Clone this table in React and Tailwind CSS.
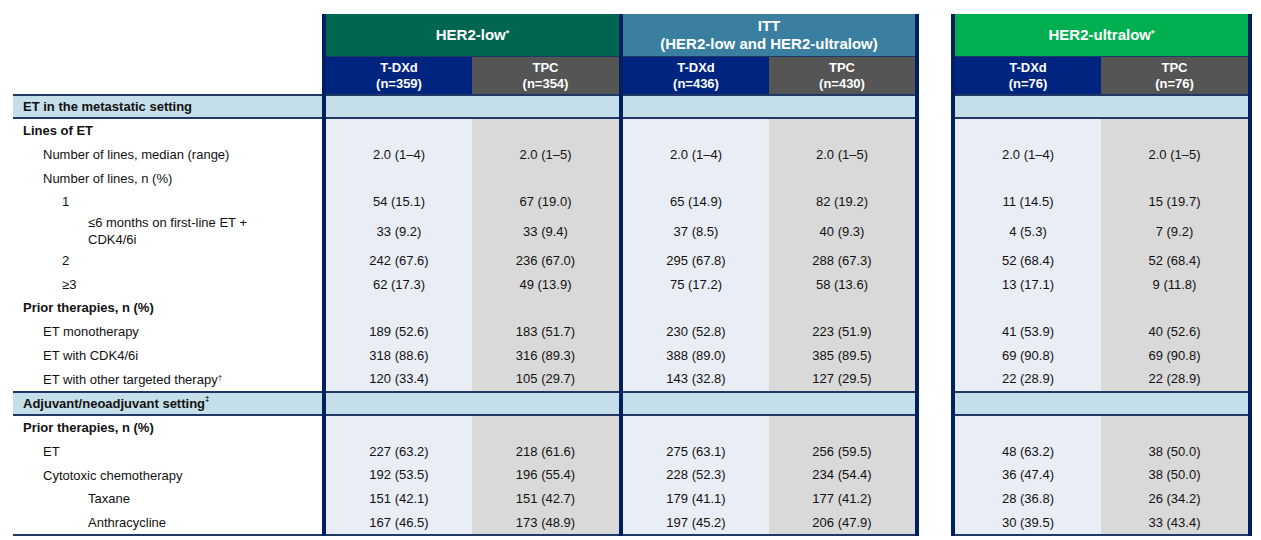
const NAVY = "bg-[#002060]";

const rows = [
  { label: "Lines of ET", bold: true, indent: 0 },
  { label: "Number of lines, median (range)", indent: 1, v: ["2.0 (1–4)", "2.0 (1–5)", "2.0 (1–4)", "2.0 (1–5)", "2.0 (1–4)", "2.0 (1–5)"] },
  { label: "Number of lines, n (%)", indent: 1 },
  { label: "1", indent: 2, v: ["54 (15.1)", "67 (19.0)", "65 (14.9)", "82 (19.2)", "11 (14.5)", "15 (19.7)"] },
  {
    label: (
      <>
        ≤6 months on first-line ET +<br />
        CDK4/6i
      </>
    ),
    indent: 3,
    tall: true,
    v: ["33 (9.2)", "33 (9.4)", "37 (8.5)", "40 (9.3)", "4 (5.3)", "7 (9.2)"],
  },
  { label: "2", indent: 2, v: ["242 (67.6)", "236 (67.0)", "295 (67.8)", "288 (67.3)", "52 (68.4)", "52 (68.4)"] },
  { label: "≥3", indent: 2, v: ["62 (17.3)", "49 (13.9)", "75 (17.2)", "58 (13.6)", "13 (17.1)", "9 (11.8)"] },
  { label: "Prior therapies, n (%)", bold: true, indent: 0 },
  { label: "ET monotherapy", indent: 1, v: ["189 (52.6)", "183 (51.7)", "230 (52.8)", "223 (51.9)", "41 (53.9)", "40 (52.6)"] },
  { label: "ET with CDK4/6i", indent: 1, v: ["318 (88.6)", "316 (89.3)", "388 (89.0)", "385 (89.5)", "69 (90.8)", "69 (90.8)"] },
  {
    label: (
      <>
        ET with other targeted therapy<sup className="text-[8px]">†</sup>
      </>
    ),
    indent: 1,
    v: ["120 (33.4)", "105 (29.7)", "143 (32.8)", "127 (29.5)", "22 (28.9)", "22 (28.9)"],
  },
  {
    section: (
      <>
        Adjuvant/neoadjuvant setting<sup className="text-[8px]">‡</sup>
      </>
    ),
  },
  { label: "Prior therapies, n (%)", bold: true, indent: 0 },
  { label: "ET", indent: 1, v: ["227 (63.2)", "218 (61.6)", "275 (63.1)", "256 (59.5)", "48 (63.2)", "38 (50.0)"] },
  { label: "Cytotoxic chemotherapy", indent: 1, v: ["192 (53.5)", "196 (55.4)", "228 (52.3)", "234 (54.4)", "36 (47.4)", "38 (50.0)"] },
  { label: "Taxane", indent: 3, v: ["151 (42.1)", "151 (42.7)", "179 (41.1)", "177 (41.2)", "28 (36.8)", "26 (34.2)"] },
  { label: "Anthracycline", indent: 3, v: ["167 (46.5)", "173 (48.9)", "197 (45.2)", "206 (47.9)", "30 (39.5)", "33 (43.4)"] },
];

const indents = ["pl-[10px]", "pl-[30px]", "pl-[49px]", "pl-[75px]"];
const widths = ["w-[146px]", "w-[147px]", "w-[146px]", "w-[146px]", "w-[146px]", "w-[147px]"];
const tints = ["bg-[#e9edf5]", "bg-[#d9d9d9]"];

const Line = () => <div className={`w-[4px] shrink-0 ${NAVY}`} />;
const Gap = () => <div className="w-[32px] shrink-0 bg-white" />;

const RowFrame = ({ h, label, cells }) => (
  <div className={`flex ${h}`}>
    {label}
    <Line />
    {cells[0]}
    {cells[1]}
    <Line />
    {cells[2]}
    {cells[3]}
    <Line />
    <Gap />
    <Line />
    {cells[4]}
    {cells[5]}
    <Line />
  </div>
);

const SectionRow = ({ title }) => {
  const band = "bg-[#c5dfea] border-y-2 border-[#1f3864]";
  return (
    <div className="flex h-[25px]">
      <div className={`w-[309px] shrink-0 ${band} pl-[10px] flex items-center font-bold`}>{title}</div>
      <Line />
      <div className={`w-[293px] shrink-0 ${band}`} />
      <Line />
      <div className={`w-[292px] shrink-0 ${band}`} />
      <Line />
      <Gap />
      <Line />
      <div className={`w-[293px] shrink-0 ${band}`} />
      <Line />
    </div>
  );
};

const DataRow = ({ row }) => {
  const h = row.tall ? "h-[35px]" : "h-[23.7px]";
  const label = (
    <div
      className={`w-[309px] shrink-0 flex items-center leading-[17px] ${indents[row.indent]} ${row.bold ? "font-bold" : ""}`}
    >
      <span>{row.label}</span>
    </div>
  );
  const cells = widths.map((w, i) => (
    <div key={i} className={`${w} shrink-0 ${tints[i % 2]} flex items-center justify-center`}>
      {row.v ? row.v[i] : ""}
    </div>
  ));
  return <RowFrame h={h} label={label} cells={cells} />;
};

const GroupHead = ({ w, color, children }) => (
  <div
    className={`${w} shrink-0 ${color} border-b border-[#1f3864] flex items-center justify-center text-center text-white font-bold text-[15px] leading-[18px]`}
  >
    {children}
  </div>
);

const SubHead = ({ w, color, n }) => (
  <div className={`${w} shrink-0 ${color} flex flex-col items-center justify-center text-white font-bold leading-[16px]`}>
    <span>{n[0]}</span>
    <span>{n[1]}</span>
  </div>
);

export default function App() {
  return (
    <div
      className="w-[1261px] h-[540px] bg-white text-[#111] text-[13px] pt-[14px] pl-[13px] overflow-hidden"
      style={{ fontFamily: '"Liberation Sans", Arial, sans-serif' }}
    >
      <div className="flex h-[43px]">
        <div className="w-[309px] shrink-0" />
        <Line />
        <GroupHead w="w-[293px]" color="bg-[#006650]">
          <span>
            HER2-low<sup className="text-[9px]">*</sup>
          </span>
        </GroupHead>
        <Line />
        <GroupHead w="w-[292px]" color="bg-[#3a7fa0]">
          <span>
            ITT
            <br />
            (HER2-low and HER2-ultralow)
          </span>
        </GroupHead>
        <Line />
        <Gap />
        <Line />
        <GroupHead w="w-[293px]" color="bg-[#00b050]">
          <span>
            HER2-ultralow<sup className="text-[9px]">*</sup>
          </span>
        </GroupHead>
        <Line />
      </div>
      <div className="flex h-[37px]">
        <div className="w-[309px] shrink-0" />
        <Line />
        <SubHead w="w-[146px]" color="bg-[#002580]" n={["T-DXd", "(n=359)"]} />
        <SubHead w="w-[147px]" color="bg-[#555555]" n={["TPC", "(n=354)"]} />
        <Line />
        <SubHead w="w-[146px]" color="bg-[#002580]" n={["T-DXd", "(n=436)"]} />
        <SubHead w="w-[146px]" color="bg-[#555555]" n={["TPC", "(n=430)"]} />
        <Line />
        <Gap />
        <Line />
        <SubHead w="w-[146px]" color="bg-[#002580]" n={["T-DXd", "(n=76)"]} />
        <SubHead w="w-[147px]" color="bg-[#555555]" n={["TPC", "(n=76)"]} />
        <Line />
      </div>
      <SectionRow title="ET in the metastatic setting" />
      {rows.map((r, i) => (r.section ? <SectionRow key={i} title={r.section} /> : <DataRow key={i} row={r} />))}
      <div className="flex h-[2px]">
        <div className="w-[309px] shrink-0 bg-[#1f3864]" />
        <Line />
        <div className="w-[293px] shrink-0 bg-[#1f3864]" />
        <Line />
        <div className="w-[292px] shrink-0 bg-[#1f3864]" />
        <Line />
        <Gap />
        <Line />
        <div className="w-[293px] shrink-0 bg-[#1f3864]" />
        <Line />
      </div>
    </div>
  );
}
